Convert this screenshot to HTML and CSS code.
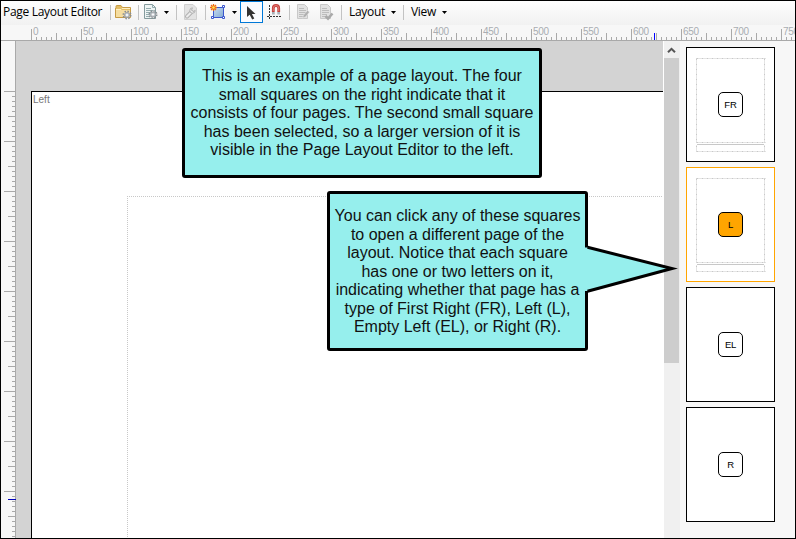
FILE: index.html
```html
<!DOCTYPE html>
<html lang="en">
<head>
<meta charset="utf-8">
<title>Page Layout Editor</title>
<link rel="stylesheet" href="styles.css">
</head>
<body>
<div class="window">
  <header class="toolbar">
    <div class="title"><span>Page Layout Editor</span></div>
    <i class="sep"></i>
    <div class="tool w27">
      <svg width="17" height="17" viewBox="0 0 17 17"><path d="M1 3.5V2.2Q1 1.500 1.700 1.500H6L7.500 3.500H15.500V13.500H.5V4Z" fill="#e3bd64" stroke="#c79b45"/><path d="M1 6H15V13H1Z" fill="#f5dda0"/><path d="M1 5.500H6L7 4.500H15" fill="none" stroke="#fff0c4"/><use href="#gear" x="7" y="6"/></svg>
    </div>
    <i class="sep"></i>
    <div class="tool w23">
      <svg width="17" height="17" viewBox="0 0 17 17"><path d="M1.500 .5H9.500L12.500 3.500V14.500H1.500Z" fill="#eef4f4" stroke="#849b9d"/><path d="M9.500 .5V3.500H12.500M3 4.500H8M3 6.500H10M3 8.500H10M3 10.500H7M3 12.500H6" fill="none" stroke="#94adaf"/><use href="#gear" x="5" y="5.500"/></svg>
    </div>
    <div class="arrow w14"><i class="caret"></i></div>
    <i class="sep"></i>
    <div class="tool w28 shift">
      <svg width="15" height="17" viewBox="0 0 15 17"><path d="M1.500 .5H10L13.500 4V15.500H1.500Z" fill="#e3e3e3" stroke="#d0d0d0"/><path d="M4 12.500L8.500 8" stroke="#b2b2b2" stroke-width="4" stroke-linecap="round"/><path d="M4 12.500L8.500 8" stroke="#ececec" stroke-width="2" stroke-linecap="round"/><path d="M9.500 3.800A2.700 2.700 0 1 0 12.200 6.500L10 7.500L8.500 6Z" fill="#ececec" stroke="#b2b2b2"/></svg>
    </div>
    <i class="sep"></i>
    <div class="tool w23">
      <svg width="17" height="17" viewBox="0 0 17 17"><defs><linearGradient id="blue" x2="1" y2="1"><stop stop-color="#c9def1"/><stop offset="1" stop-color="#83a9d2"/></linearGradient></defs><path d="M3.500 3.500H13.500V13.500H3.500Z" fill="url(#blue)" stroke="#3b56ce"/><g fill="#fff" stroke="#3b56ce"><path d="M12.500 1.500h2v2h-2zM1.500 12.500h2v2h-2zM12.500 12.500h2v2h-2z"/></g><path d="M3.500 0V7M0 3.500H7M1 1L6 6M6 1L1 6" stroke="#ef6b12" stroke-width="1.300"/><circle cx="3.500" cy="3.500" r="1.300" fill="#ffe34a"/></svg>
    </div>
    <div class="arrow w11 shape-arrow"><i class="caret"></i></div>
    <div class="tool w23 active">
      <svg width="12" height="16" viewBox="0 0 12 16"><path d="M2 1V12L4.700 9.700L7.200 14.500L9.300 13.400L6.900 8.900H10.500Z" fill="#333"/></svg>
    </div>
    <div class="tool w26">
      <svg width="16" height="17" viewBox="0 0 16 17"><path d="M6.300 8V4.200A2.700 2.700 0 0 1 11.700 4.200V8" fill="none" stroke="#c5403c" stroke-width="2.800"/><path d="M6.300 7V4.200A2.700 2.700 0 0 1 11.700 4.200V7" fill="none" stroke="#e98680" stroke-width=".8"/><path d="M5 8H7.700V10.500H5ZM10.300 8H13V10.500H10.300Z" fill="#a9b0b8"/><path d="M2.500 1V15" stroke="#333" stroke-dasharray="2 1"/><path d="M0 12.500H15" stroke="#333" stroke-dasharray="2 1"/></svg>
    </div>
    <i class="sep"></i>
    <div class="tool w25 shift">
      <svg width="16" height="17" viewBox="0 0 16 17"><use href="#page"/><path d="M6.500 14L7.500 11L11.500 6.500L13.500 8L9.500 13Z" fill="#b0b0b0" stroke="#eee" stroke-width=".5"/></svg>
    </div>
    <div class="tool w26">
      <svg width="16" height="17" viewBox="0 0 16 17"><use href="#page"/><path d="M6.500 12L9 14.500L13.500 9.500" fill="none" stroke="#aaa" stroke-width="2.600"/></svg>
    </div>
    <i class="sep"></i>
    <div class="menu w47"><span>Layout</span></div>
    <div class="arrow w14"><i class="caret"></i></div>
    <i class="sep"></i>
    <div class="menu w36"><span>View</span></div>
    <div class="arrow w11"><i class="caret"></i></div>
  </header>

  <div class="ruler-x">
    <div class="scale-x"><span>0</span><span>50</span><span>100</span><span>150</span><span>200</span><span>250</span><span>300</span><span>350</span><span>400</span><span>450</span><span>500</span><span>550</span><span>600</span><span>650</span><span>700</span><span>750</span></div>
    <i class="mark-x"></i>
  </div>

  <main class="workspace">
    <div class="ruler-y"><div class="scale-y"></div><i class="mark-y"></i></div>
    <section class="canvas">
      <div class="page">
        <div class="page-name">Left</div>
        <div class="margin-box"></div>
      </div>
    </section>
    <div class="scrollbar">
      <svg class="up" width="15" height="17" viewBox="0 0 15 17"><path d="M4 11.300L7.500 7.800L11 11.300" fill="none" stroke="#555" stroke-width="2"/></svg>
      <div class="thumb"></div>
    </div>
    <aside class="pages">
      <div class="mini"><svg class="guides" width="87" height="113"><use href="#frame"/></svg><b>FR</b></div>
      <div class="mini selected"><svg class="guides" width="87" height="113"><use href="#frame"/></svg><b>L</b></div>
      <div class="mini"><b>EL</b></div>
      <div class="mini"><b>R</b></div>
    </aside>
  </main>
</div>

<div class="callout first">
  <p><span>This is an example of a page layout. The four</span><span>small squares on the right indicate that it</span><span>consists of four pages. The second small square</span><span>has been selected, so a larger version of it is</span><span>visible in the Page Layout Editor to the left.</span></p>
</div>
<div class="callout second">
  <svg class="pointer" width="96" height="52" viewBox="0 0 96 52"><path d="M0 5.500L3.500 5.500L88 26.500L3.500 49L0 49Z" fill="#96efed"/><path d="M2.500 5.300L87 26.500L2.500 49.300" fill="none" stroke="#000" stroke-width="3" stroke-miterlimit="10"/></svg>
  <p><span>You can click any of these squares</span><span>to open a different page of the</span><span>layout. Notice that each square</span><span>has one or two letters on it,</span><span>indicating whether that page has a</span><span>type of First Right (FR), Left (L),</span><span>Empty Left (EL), or Right (R).</span></p>
</div>

<svg class="defs" width="0" height="0">
  <defs>
    <g id="gear"><circle cx="5" cy="5" r="3.700" fill="none" stroke="#888d92" stroke-width="1.600" stroke-dasharray="1.500 1.400"/><circle cx="5" cy="5" r="2.500" fill="#c8cdd2" stroke="#9ba0a5"/><circle cx="5" cy="5" r="1" fill="#fff"/></g>
    <g id="page"><path d="M1.500 .5H8.500L11.500 3.500V14.500H1.500Z" fill="#e2e2e2" stroke="#c9c9c9"/><path d="M3 4.500H8M3 6.500H10M3 8.500H10M3 10.500H8M3 12.500H7" stroke="#bdbdbd"/></g>
    <g id="frame" fill="none" stroke="#c8c8c8"><path d="M9.500 10.500H78.500M9.500 94.500H78.500M9.500 103.500H78.500M9.500 10.500V94.500M77.500 10.500V94.500M9.500 97.500V103.500M77.500 97.500V103.500" stroke-dasharray="2 1 1 1"/><path d="M10 96.500H77"/></g>
  </defs>
</svg>
</body>
</html>
```
FILE: styles.css
```css
* { box-sizing: border-box; }
body { margin: 0; width: 796px; height: 539px; overflow: hidden; position: relative; font-family: "Open Sans", sans-serif; }
.window { width: 796px; height: 539px; border: 1px solid #000; display: flex; flex-direction: column; background: #f7f7f7; overflow: hidden; }

.toolbar { height: 24px; flex: none; display: flex; background: linear-gradient(#fefefe, #f1f1f1); font-size: 12px; line-height: 22px; color: #000; }
.toolbar > * { flex: none; white-space: nowrap; }
.title { width: 109px; padding-left: 2px; letter-spacing: -.3px; }
.sep { width: 1px; height: 15px; margin-top: 4px; background: #c3c3c3; }
.tool { height: 22px; padding: 3px 0 0 4px; }
.tool svg { display: block; }
.w11 { width: 11px; } .w14 { width: 14px; } .w23 { width: 23px; } .w25 { width: 25px; }
.w26 { width: 26px; } .w27 { width: 27px; } .w28 { width: 28px; } .w36 { width: 36px; } .w47 { width: 47px; }
.shift { padding-left: 6px; }
.arrow { padding: 10px 0 0 2px; }
.shape-arrow { padding-left: 3px; }
.caret { display: block; width: 5px; height: 3px; background: #000; clip-path: polygon(0 0, 100% 0, 50% 100%); }
.active { border: 1px solid #0078d7; background: #fafcff; }
.menu { padding-left: 7px; letter-spacing: -.3px; }

.ruler-x { height: 16px; flex: none; border-bottom: 1px solid #a9a9a9; padding-left: 30px; position: relative; overflow: hidden; }
.scale-x { display: flex; height: 15px; width: 800px;
  background:
    repeating-linear-gradient(90deg, #a9a9a9 0 1px, transparent 1px 25px) 0 100% / 100% 7px no-repeat,
    repeating-linear-gradient(90deg, #a9a9a9 0 1px, transparent 1px 5px) 0 100% / 100% 3px no-repeat; }
.scale-x span { width: 50px; flex: none; height: 11px; align-self: flex-end; border-left: 1px solid #a9a9a9; font: 10px/5px "Liberation Sans", sans-serif; letter-spacing: -.3px; color: #a9adb2; padding-left: 1px; }
.mark-x { position: absolute; left: 653px; top: 8px; width: 1px; height: 8px; background: #00f; }

.workspace { flex: 1; display: flex; min-height: 0; }
.ruler-y { width: 15px; flex: none; border-right: 1px solid #a9a9a9; padding-top: 50px; position: relative; }
.scale-y { height: 447px;
  background:
    repeating-linear-gradient(#a9a9a9 0 1px, transparent 1px 50px) 100% 0 / 11px 100% no-repeat,
    repeating-linear-gradient(#a9a9a9 0 1px, transparent 1px 25px) 100% 0 / 7px 100% no-repeat,
    repeating-linear-gradient(#a9a9a9 0 1px, transparent 1px 5px) 100% 0 / 3px 100% no-repeat; }
.mark-y { position: absolute; left: 7px; top: 458px; width: 8px; height: 1px; background: #00b; }
.canvas { width: 647px; flex: none; background: #d3d3d3; padding: 50px 0 0 15px; }
.page { height: 100%; background: #fff; border: solid #000; border-width: 1px 0 0 1px; display: flex; flex-direction: column; }
.page-name { height: 104px; flex: none; padding: 2px 0 0 1px; font: 10px/11px "Liberation Sans", sans-serif; color: #777; }
.margin-box { flex: 1; margin-left: 95px; margin-right: 1px;
  background:
    repeating-linear-gradient(90deg, #c8c8c8 0 1px, transparent 1px 2px) 0 0 / 100% 1px no-repeat,
    repeating-linear-gradient(#c8c8c8 0 1px, transparent 1px 2px) 0 0 / 1px 100% no-repeat; }
.scrollbar { width: 17px; flex: none; background: #f0f0f0; border-left: 1px solid #fff; }
.up { display: block; }
.thumb { width: 15px; height: 305px; background: #cdcdcd; }
.pages { flex: 1; display: flex; flex-direction: column; gap: 5px; padding: 6px 0 0 6px; }
.mini { width: 89px; height: 115px; flex: none; border: 1px solid #000; background: #fff; display: grid; place-items: center; }
.mini > * { grid-area: 1 / 1; }
.selected { border-color: #ffa500; }
.guides { display: block; }
.mini b { width: 25px; height: 25px; border: 1px solid #000; border-radius: 5px; background: #fff; font: 9.5px/23px "Liberation Sans", sans-serif; letter-spacing: -.2px; text-align: center; }
.selected b { background: #ffa500; }

.callout { position: absolute; border: 3px solid #000; border-radius: 3px; background: #96efed; font: 16px/18.5px "Liberation Sans", sans-serif; color: #111; text-align: center; }
.callout p { margin: 0; white-space: nowrap; }
.callout p span { display: block; }
.first { left: 182px; top: 48px; width: 360px; height: 130px; padding-top: 16px; }
.second { left: 327px; top: 191px; width: 261px; height: 160px; padding-top: 13px; }
.pointer { position: absolute; left: 255px; top: 48px; }
.defs { position: absolute; }
```
